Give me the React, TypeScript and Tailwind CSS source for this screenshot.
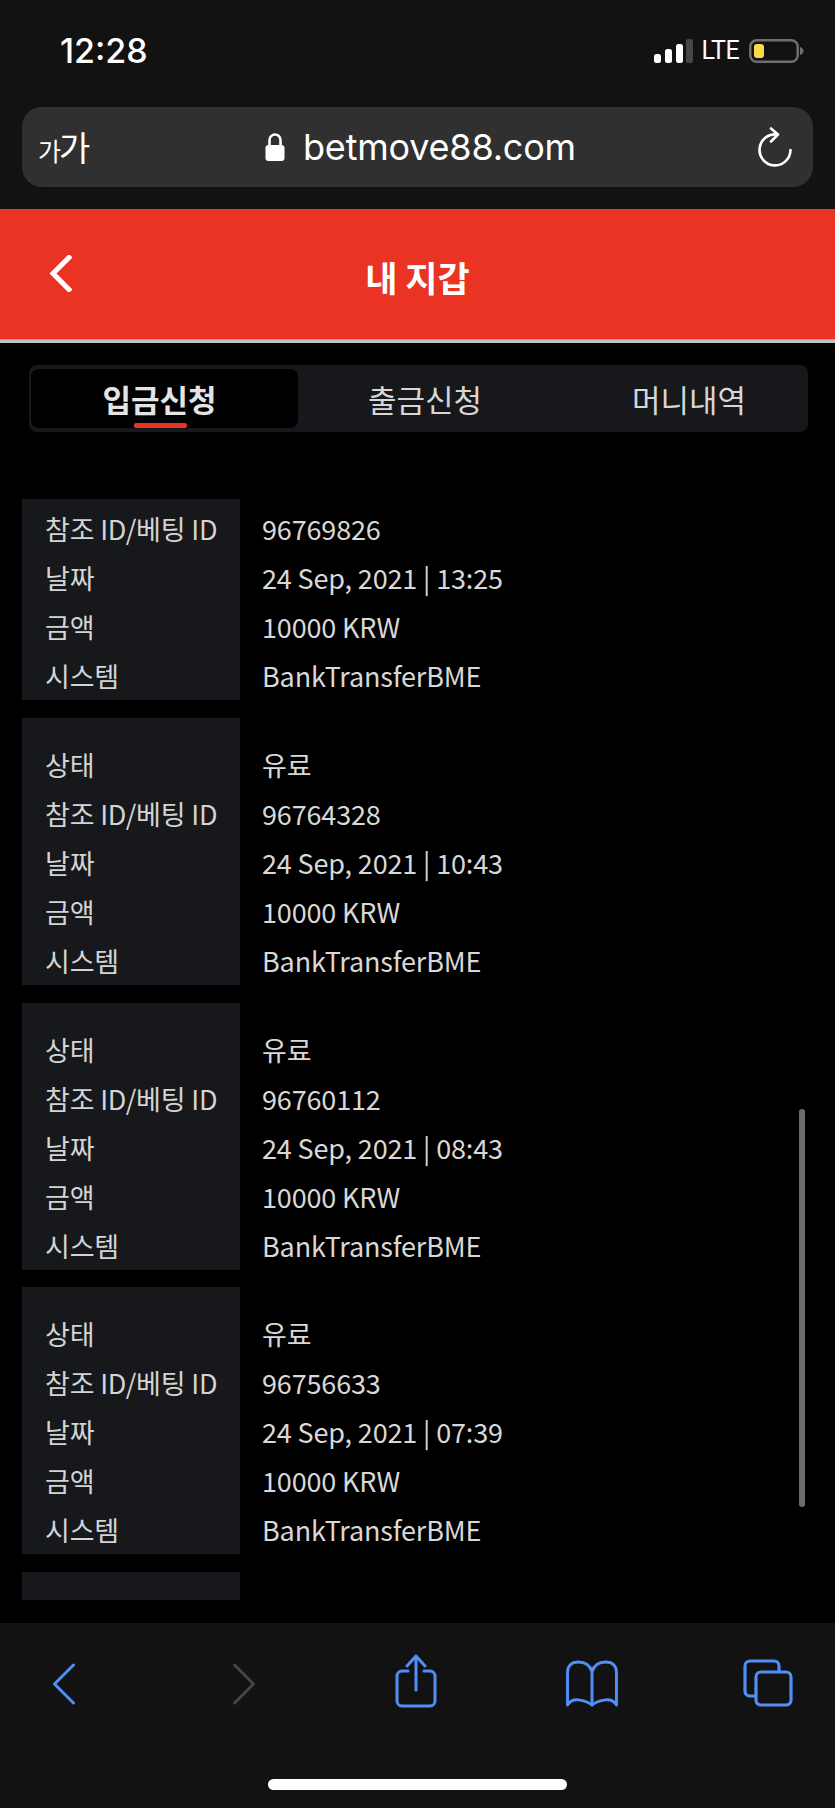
const sans = "font-['Noto_Sans_CJK_KR','Noto_Sans',sans-serif]";
const ui = "font-['Inter','Noto_Sans_CJK_KR',sans-serif]";

type Row = [string, string];

function rows(id: string, date: string, withStatus = true): Row[] {
  const list: Row[] = [
    ["참조 ID/베팅 ID", id],
    ["날짜", date],
    ["금액", "10000 KRW"],
    ["시스템", "BankTransferBME"],
  ];
  return withStatus ? [["상태", "유료"], ...list] : list;
}

const cards = [
  rows("96769826", "24 Sep, 2021 | 13:25", false),
  rows("96764328", "24 Sep, 2021 | 10:43"),
  rows("96760112", "24 Sep, 2021 | 08:43"),
  rows("96756633", "24 Sep, 2021 | 07:39"),
];

function StatusBar() {
  return (
    <div className="flex h-[107px] items-start justify-between bg-[#121212] pl-[60px] pr-[31px]">
      <span className={`${ui} mt-[30px] text-[34px] leading-[42px] font-medium text-white`}>12:28</span>
      <div className="mt-[39px] flex items-center">
        <svg width="39" height="24" viewBox="0 0 39 24" fill="#fff">
          <rect x="0" y="15" width="7" height="9" rx="2.5" />
          <rect x="11" y="10" width="7" height="14" rx="2.5" />
          <rect x="22" y="5" width="7" height="19" rx="2.5" />
          <rect x="32" y="0" width="7" height="24" rx="2" fill="#464646" />
        </svg>
        <span className="ml-[9px] font-['Roboto',sans-serif] text-[25px] leading-[24px] tracking-[-0.6px] text-white">LTE</span>
        <svg className="ml-[10px]" width="55" height="24" viewBox="0 0 55 24" fill="none">
          <rect x="1.25" y="1.25" width="47.5" height="21.5" rx="6.5" stroke="#6e6e6e" strokeWidth="2.5" />
          <rect x="5" y="5" width="10" height="14" rx="3" fill="#ffd84a" />
          <path d="M51 8c2 .6 3.5 2 3.5 4s-1.500 3.400-3.500 4z" fill="#6e6e6e" />
        </svg>
      </div>
    </div>
  );
}

function AddressBar() {
  return (
    <div className="h-[102px] bg-[#121212] px-[22px]">
      <div className="flex h-[80px] items-center rounded-[20px] bg-[#303030] pl-[16px] pr-[21px] text-white">
        <span className={`${sans} w-[227px] text-[34px] leading-none tracking-[-2px]`}>
          <span className="text-[25px]">가</span>가
        </span>
        <svg width="20" height="28" viewBox="0 0 20 28" fill="#fff">
          <path d="M4.500 13V7a5.500 5.500 0 0 1 11 0v6" fill="none" stroke="#fff" strokeWidth="2.600" />
          <rect x="0.500" y="12" width="19" height="16" rx="3" />
        </svg>
        <span className={`${ui} ml-[18px] flex-1 text-[36px] leading-none tracking-[-0.2px]`}>betmove88.com</span>
        <svg width="34" height="40" viewBox="0 0 34 40" fill="none" stroke="#fff" strokeWidth="2.600" strokeLinecap="round" strokeLinejoin="round">
          <path d="M19 7.500A15.500 15.500 0 1 0 32.500 23" />
          <path d="M13 1.500l7 6-7 7" />
        </svg>
      </div>
    </div>
  );
}

function Header() {
  return (
    <div className="relative flex h-[134px] items-center justify-center border-b-[3px] border-[#c4c4c4] bg-[#ea3323] pt-[3px] shadow-[inset_0_-1px_0_#e98a80]">
      <svg className="absolute left-[49px] top-[46px]" width="23" height="37" viewBox="0 0 23 37" fill="none" stroke="#fff" strokeWidth="5" strokeLinecap="square">
        <path d="M20 2.500 4 18.500l16 16" />
      </svg>
      <span className={`${sans} text-[35px] leading-none font-bold text-white`}>내 지갑</span>
    </div>
  );
}

function Tabs() {
  return (
    <div className="ml-[29px] mr-[27px] mt-[22px] flex h-[67px] shrink-0 rounded-[8px] bg-[#17181c] pl-[2px] pt-[4px]">
      <div className="relative flex h-[59px] w-[267px] items-center justify-center rounded-[8px] bg-black pr-[10px]">
        <span className={`${sans} text-[31px] leading-none font-bold text-[#e4e4e4]`}>입금신청</span>
        <span className="absolute bottom-0 left-[103px] h-[5px] w-[53px] rounded-[2px] bg-[#ea3323]" />
      </div>
      <div className={`${sans} flex h-[59px] w-[254px] items-center justify-center text-[31px] leading-none text-[#d6d6d6]`}>출금신청</div>
      <div className={`${sans} flex h-[59px] flex-1 items-center justify-center pl-[18px] text-[31px] leading-none text-[#d6d6d6]`}>머니내역</div>
    </div>
  );
}

function Card({ data, first }: { data: Row[]; first?: boolean }) {
  const pad = first ? "pt-[5px]" : "pt-[22px]";
  return (
    <div className="flex">
      <div className={`w-[218px] bg-[#17181c] ${pad}`}>
        {data.map(([label]) => (
          <div key={label} className="h-[49px] whitespace-nowrap pl-[23px] text-[27px] leading-[49px] tracking-[-0.2px] text-[#d4d4d4]">
            {label}
          </div>
        ))}
      </div>
      <div className={`ml-[22px] ${pad}`}>
        {data.map(([label, value]) => (
          <div key={label} className="h-[49px] whitespace-nowrap text-[27px] leading-[49px] tracking-[-0.15px] text-[#d8d8d8]">
            {value}
          </div>
        ))}
      </div>
    </div>
  );
}

function History() {
  return (
    <div className={`${sans} relative min-h-0 flex-1 overflow-hidden bg-black`}>
      <div className="mt-[67px] flex flex-col gap-[17.8px] pl-[22px]">
        {cards.map((data, i) => (
          <Card key={i} data={data} first={i === 0} />
        ))}
        <div className="h-[28px] w-[218px] bg-[#17181c]" />
      </div>
      <div className="absolute right-[30px] top-[677px] h-[398px] w-[6px] rounded-full bg-[#6c6c6c]" />
    </div>
  );
}

function Toolbar() {
  const blue = "#4f8ff7";
  return (
    <div className="h-[185px] shrink-0 bg-[#121212]">
      <div className="-ml-[24px] flex h-[84px] items-end">
        <div className="flex w-[176px] shrink-0 justify-center">
          <svg className="mb-[2px]" width="24" height="42" viewBox="0 0 24 42" fill="none" stroke={blue} strokeWidth="3" strokeLinecap="round" strokeLinejoin="round">
            <path d="M21.500 2 2.500 21l19 19" />
          </svg>
        </div>
        <div className="flex w-[176px] shrink-0 justify-center pl-[8px]">
          <svg className="mb-[2px]" width="24" height="42" viewBox="0 0 24 42" fill="none" stroke="#454545" strokeWidth="3" strokeLinecap="round" strokeLinejoin="round">
            <path d="M2.500 2l19 19-19 19" />
          </svg>
        </div>
        <div className="flex w-[176px] shrink-0 justify-center">
          <svg className="-mb-[1px]" width="42" height="54" viewBox="0 0 42 54" fill="none" stroke={blue} strokeWidth="3" strokeLinecap="round" strokeLinejoin="round">
            <path d="M13 17H7a5 5 0 0 0-5 5v25a5 5 0 0 0 5 5h28a5 5 0 0 0 5-5V22a5 5 0 0 0-5-5h-6" />
            <path d="M21 36V2" />
            <path d="M12 12l9-10 9 10" />
          </svg>
        </div>
        <div className="flex w-[176px] shrink-0 justify-center">
          <svg width="54" height="47" viewBox="0 0 54 48" fill="none" stroke={blue} strokeWidth="3" strokeLinecap="round" strokeLinejoin="round">
            <path d="M27 12C25 5 20 2 13 2 6 2 2 6 2 13v33c3-5 8-6 13-5 5 .8 9 2.500 12 5 3-2.500 7-4.200 12-5 5-1 10 0 13 5V13c0-7-4-11-11-11-7 0-12 3-14 10z" />
            <path d="M27 12v34" />
          </svg>
        </div>
        <div className="flex w-[176px] shrink-0 justify-center">
          <svg width="50" height="48" viewBox="0 0 50 48" fill="none" stroke={blue} strokeWidth="3.200" strokeLinejoin="round">
            <path d="M12 37H7a5 5 0 0 1-5-5V7a5 5 0 0 1 5-5h24a5 5 0 0 1 5 5v6" />
            <rect x="13" y="13" width="35" height="33" rx="5" />
          </svg>
        </div>
      </div>
      <div className="mt-[72px] flex justify-center">
        <div className="h-[11px] w-[299px] rounded-full bg-white" />
      </div>
    </div>
  );
}

export default function App() {
  return (
    <div className="flex h-[1808px] w-[835px] flex-col overflow-hidden bg-black">
      <StatusBar />
      <AddressBar />
      <Header />
      <div className="flex min-h-0 flex-1 flex-col">
        <Tabs />
        <History />
      </div>
      <Toolbar />
    </div>
  );
}
